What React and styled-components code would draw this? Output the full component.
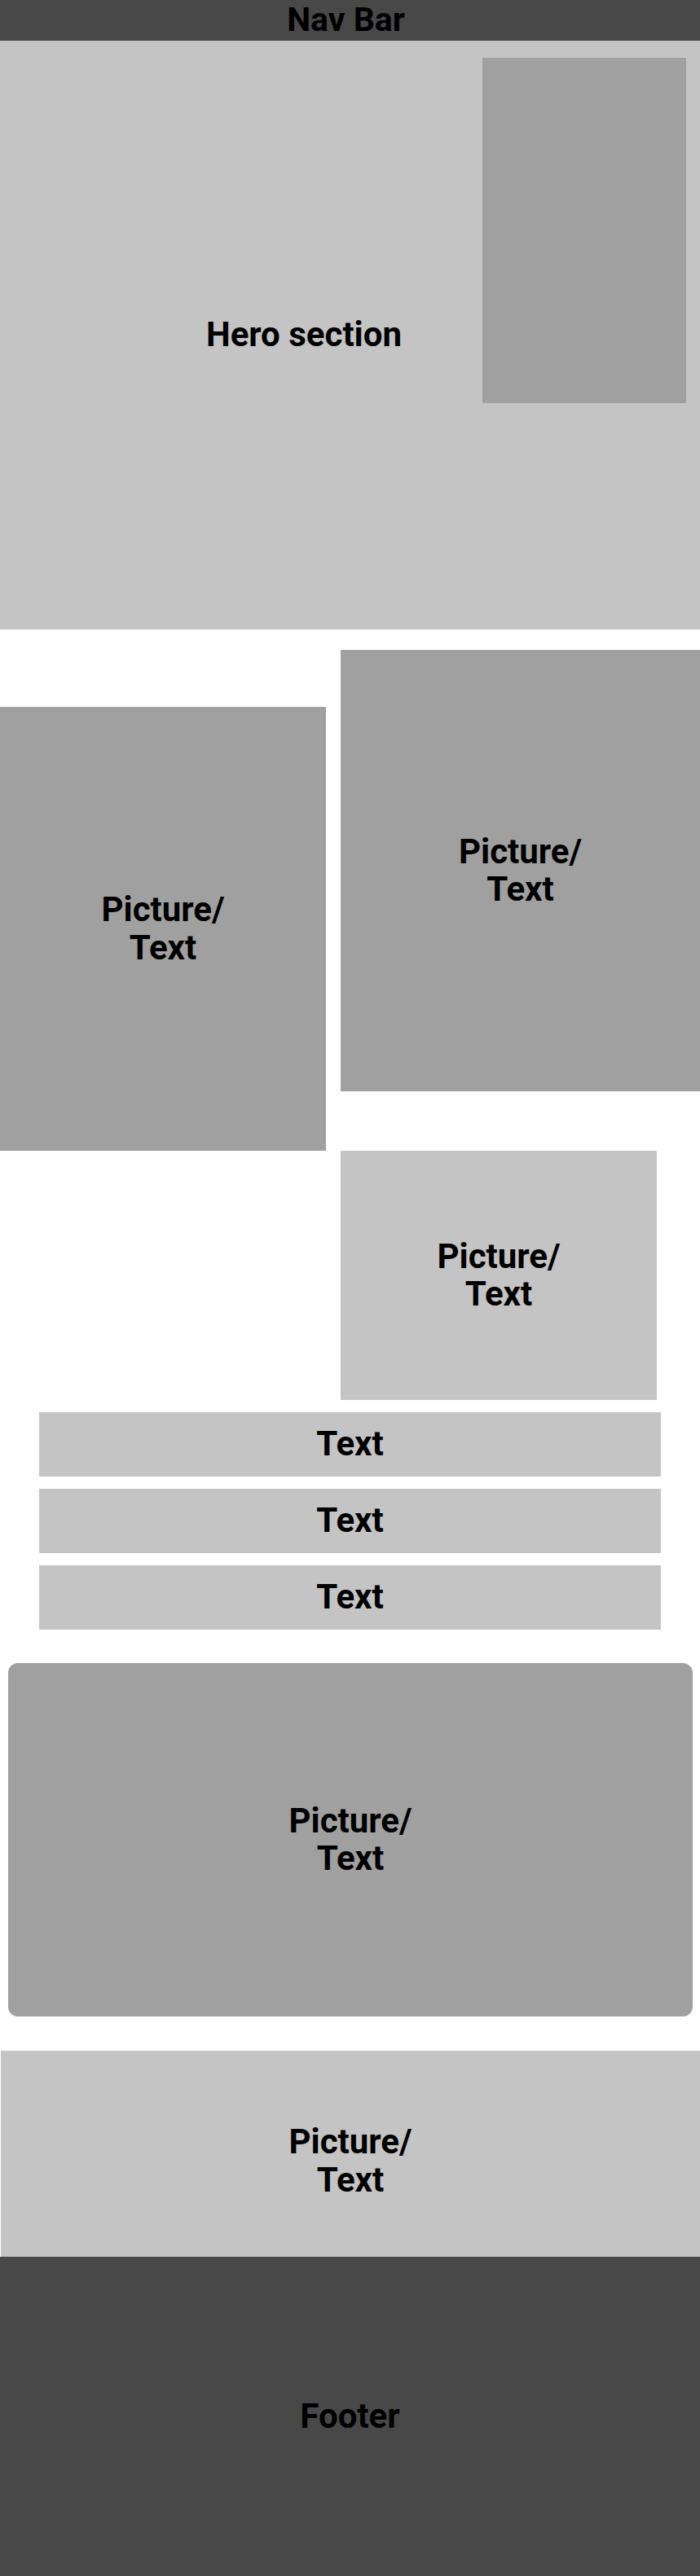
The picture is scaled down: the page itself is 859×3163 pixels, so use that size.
import React from 'react';
import styled, { createGlobalStyle } from 'styled-components';

// Page-wide reset and font
const GlobalStyle = createGlobalStyle`
    body {
        margin: 0;
        background: #fff;
        font-family: Roboto, "Liberation Sans", sans-serif;
    }
    * { box-sizing: border-box; }
`;

const DARK = '#484848';
const LIGHT = '#c4c4c4';
const MID = '#a0a0a0';

const Page = styled.div`
    width: 859px;
    display: flex;
    flex-direction: column;
`;

// Shared label for every placeholder block
const Label = styled.div`
    font-size: ${({ size }) => size || 42}px;
    font-weight: 700;
    color: #000;
    text-align: center;
    line-height: 1.1;
`;

const NavBar = styled.header`
    height: 50px;
    background: ${DARK};
    display: flex;
    align-items: center;
    justify-content: center;
    padding: 0 10px 0 0;
`;

// Hero: text and side picture share one grid cell
const Hero = styled.section`
    height: 723px;
    background: ${LIGHT};
    display: grid;
    grid-template-areas: 'stack';
`;

const HeroText = styled(Label)`
    grid-area: stack;
    align-self: center;
    justify-self: start;
    width: 746px;
`;

const HeroPicture = styled.div`
    grid-area: stack;
    justify-self: end;
    align-self: start;
    width: 250px;
    height: 424px;
    margin: 21px 17px 0 0;
    background: ${MID};
`;

const Block = styled.div`
    background: ${({ tone }) => tone};
    display: flex;
    align-items: center;
    justify-content: center;
    width: ${({ w }) => (w ? `${w}px` : 'auto')};
    height: ${({ h }) => h}px;
    padding-top: ${({ shift }) => shift || 0}px;
    border-radius: ${({ radius }) => radius || 0}px;
`;

const Staggered = styled.section`
    display: grid;
    grid-template-columns: 400px 441px;
    column-gap: 18px;
    padding-top: 25px;
    align-items: start;
`;

const LowBlock = styled(Block)`
    margin-top: 70px;
`;

const SideRow = styled.div`
    display: flex;
    padding-left: 418px;
`;

const TextList = styled.section`
    display: flex;
    flex-direction: column;
    gap: 15px;
    padding: 15px 48px 0;
`;

const Feature = styled.section`
    padding: 41px 9px 0 10px;
`;

const Banner = styled.section`
    padding: 42px 0 0 1px;
`;

const Footer = styled.footer`
    height: 392px;
    background: ${DARK};
    display: flex;
    align-items: center;
    justify-content: center;
`;

const PictureText = () => (
    <Label>Picture/<br />Text</Label>
);

const App = () => (
    <Page>
        <GlobalStyle />
        <NavBar>
            <Label size={41}>Nav Bar</Label>
        </NavBar>
        <Hero>
            <HeroText>Hero section</HeroText>
            <HeroPicture />
        </Hero>
        <Staggered>
            <LowBlock tone={MID} h={545}><PictureText /></LowBlock>
            <Block tone={MID} h={542}><PictureText /></Block>
        </Staggered>
        <SideRow>
            <Block tone={LIGHT} w={388} h={306}><PictureText /></Block>
        </SideRow>
        <TextList>
            {[1, 2, 3].map((i) => (
                <Block key={i} tone={LIGHT} h={79}><Label>Text</Label></Block>
            ))}
        </TextList>
        <Feature>
            <Block tone={MID} h={434} radius={12}><PictureText /></Block>
        </Feature>
        <Banner>
            <Block tone={LIGHT} h={253} shift={18}><PictureText /></Block>
        </Banner>
        <Footer>
            <Label>Footer</Label>
        </Footer>
    </Page>
);

export default App;
